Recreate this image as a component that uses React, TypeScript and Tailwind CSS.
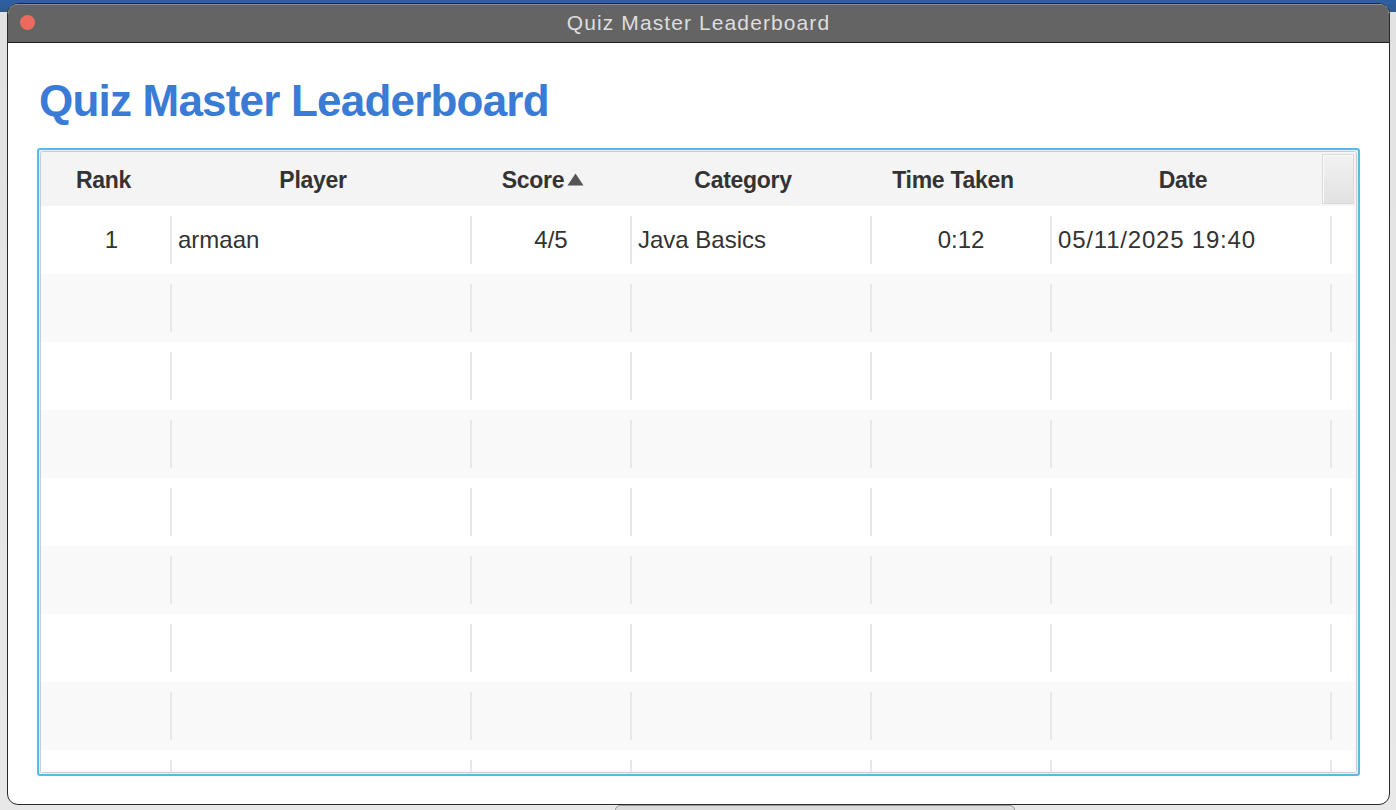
import React from "react";

type Col = { key: string; title: string; w: number; align: "center" | "left" };

const cols: Col[] = [
  { key: "rank", title: "Rank", w: 130, align: "center" },
  { key: "player", title: "Player", w: 300, align: "left" },
  { key: "score", title: "Score", w: 160, align: "center" },
  { key: "category", title: "Category", w: 240, align: "left" },
  { key: "time", title: "Time Taken", w: 180, align: "center" },
  { key: "date", title: "Date", w: 280, align: "left" },
];

const rows: Record<string, string>[] = [
  { rank: "1", player: "armaan", score: "4/5", category: "Java Basics", time: "0:12", date: "05/11/2025 19:40" },
  {}, {}, {}, {}, {}, {}, {}, {},
];

function HeaderCell({ c }: { c: Col }) {
  const pr = c.key === "rank" ? "pr-[5px]" : "pr-[16px]";
  return (
    <div
      className={`flex h-full shrink-0 items-center justify-center pt-[2px] ${pr}`}
      style={{ width: c.w }}
    >
      <span className="text-[23px] font-bold tracking-[-0.3px] text-[#333333]">{c.title}</span>
      {c.key === "score" && (
        <svg width="17" height="13" viewBox="0 0 17 13" className="ml-[3px]">
          <polygon points="8.5,0.5 16.5,12.5 0.5,12.5" fill="#555555" />
        </svg>
      )}
    </div>
  );
}

function BodyRow({ r, i }: { r: Record<string, string>; i: number }) {
  const bg = i % 2 === 0 ? "bg-white" : "bg-[#f9f9f9]";
  return (
    <div className={`flex h-[68px] shrink-0 ${bg}`}>
      {cols.map((c, ci) => (
        <div
          key={c.key}
          className="h-full shrink-0 py-[10px]"
          style={{ width: ci === 0 ? c.w - 1 : c.w }}
        >
          <div
            className={`flex h-full items-center ${ci > 0 ? "border-l-2 border-[#e8e8e8]" : ""} ${
              c.align === "center" ? "justify-center" : "justify-start pl-[6px]"
            } ${c.key === "rank" ? "pl-[12px]" : ""}`}
          >
            <span
              className={`whitespace-nowrap text-[24px] text-[#333333] ${
                c.key === "date" ? "tracking-[0.8px]" : ""
              }`}
            >
              {r[c.key] ?? ""}
            </span>
          </div>
        </div>
      ))}
      <div className="h-full flex-1 py-[10px]">
        <div className="h-full border-l-2 border-[#e8e8e8]" />
      </div>
    </div>
  );
}

export default function App() {
  return (
    <div
      className="flex h-[810px] w-[1396px] flex-col overflow-hidden bg-[linear-gradient(to_bottom,#2d5fa6_0px,#2d5c8a_12px,#e2e2e2_12px,#e8e8e8_100%)] pt-[3px]"
      style={{ fontFamily: '"Liberation Sans", Arial, sans-serif' }}
    >
      <div className="ml-[7px] flex h-[802px] w-[1383px] shrink-0 flex-col overflow-hidden rounded-[11px] border border-[#2a2a2a] bg-white">
        {/* title bar */}
        <div className="relative flex h-[39px] shrink-0 items-center justify-center border-b border-[#1e1e1e] bg-[#646464] shadow-[inset_0_1px_0_#8c8c8c]">
          <div className="absolute left-[12px] top-[11px] h-[15px] w-[15px] rounded-full bg-[#ee6a5e]" />
          <span className="text-[21px] tracking-[1.1px] text-[#dedede]">Quiz Master Leaderboard</span>
        </div>

        {/* content */}
        <div className="flex min-h-0 flex-1 flex-col px-[29px] pb-[28px] pt-[32px]">
          <h1 className="ml-[2px] shrink-0 text-[44px] font-bold leading-[1.2] tracking-[-0.8px] text-[#3a7bd6]">
            Quiz Master Leaderboard
          </h1>

          <div className="mt-[20px] flex min-h-0 flex-1 flex-col overflow-hidden rounded-[3px] border-2 border-[#55bbe8] bg-[#dff1fa] p-[1px]">
            <div className="flex min-h-0 flex-1 flex-col overflow-hidden rounded-[3px] border border-[#cccccc] bg-white">
              {/* header */}
              <div className="relative flex h-[54px] shrink-0 bg-[#f4f4f4]">
                {cols.map((c) => (
                  <HeaderCell key={c.key} c={c} />
                ))}
                <div className="flex-1" />
                <div className="absolute right-[2px] top-[2px] h-[50px] w-[32px] border border-[#dadada] bg-[linear-gradient(to_bottom,#f2f2f2,#e2e2e2)] shadow-[inset_1px_1px_0_#fafafa]" />
              </div>
              {/* body */}
              <div className="flex min-h-0 flex-1 flex-col overflow-hidden">
                {rows.map((r, i) => (
                  <BodyRow key={i} r={r} i={i} />
                ))}
              </div>
            </div>
          </div>
        </div>
      </div>
      <div className="relative min-h-0 flex-1">
        <div className="ml-[615px] h-[8px] w-[400px] rounded-t-[5px] border border-[#9a9a9a] bg-[#dcdcdc]" />
      </div>
    </div>
  );
}
